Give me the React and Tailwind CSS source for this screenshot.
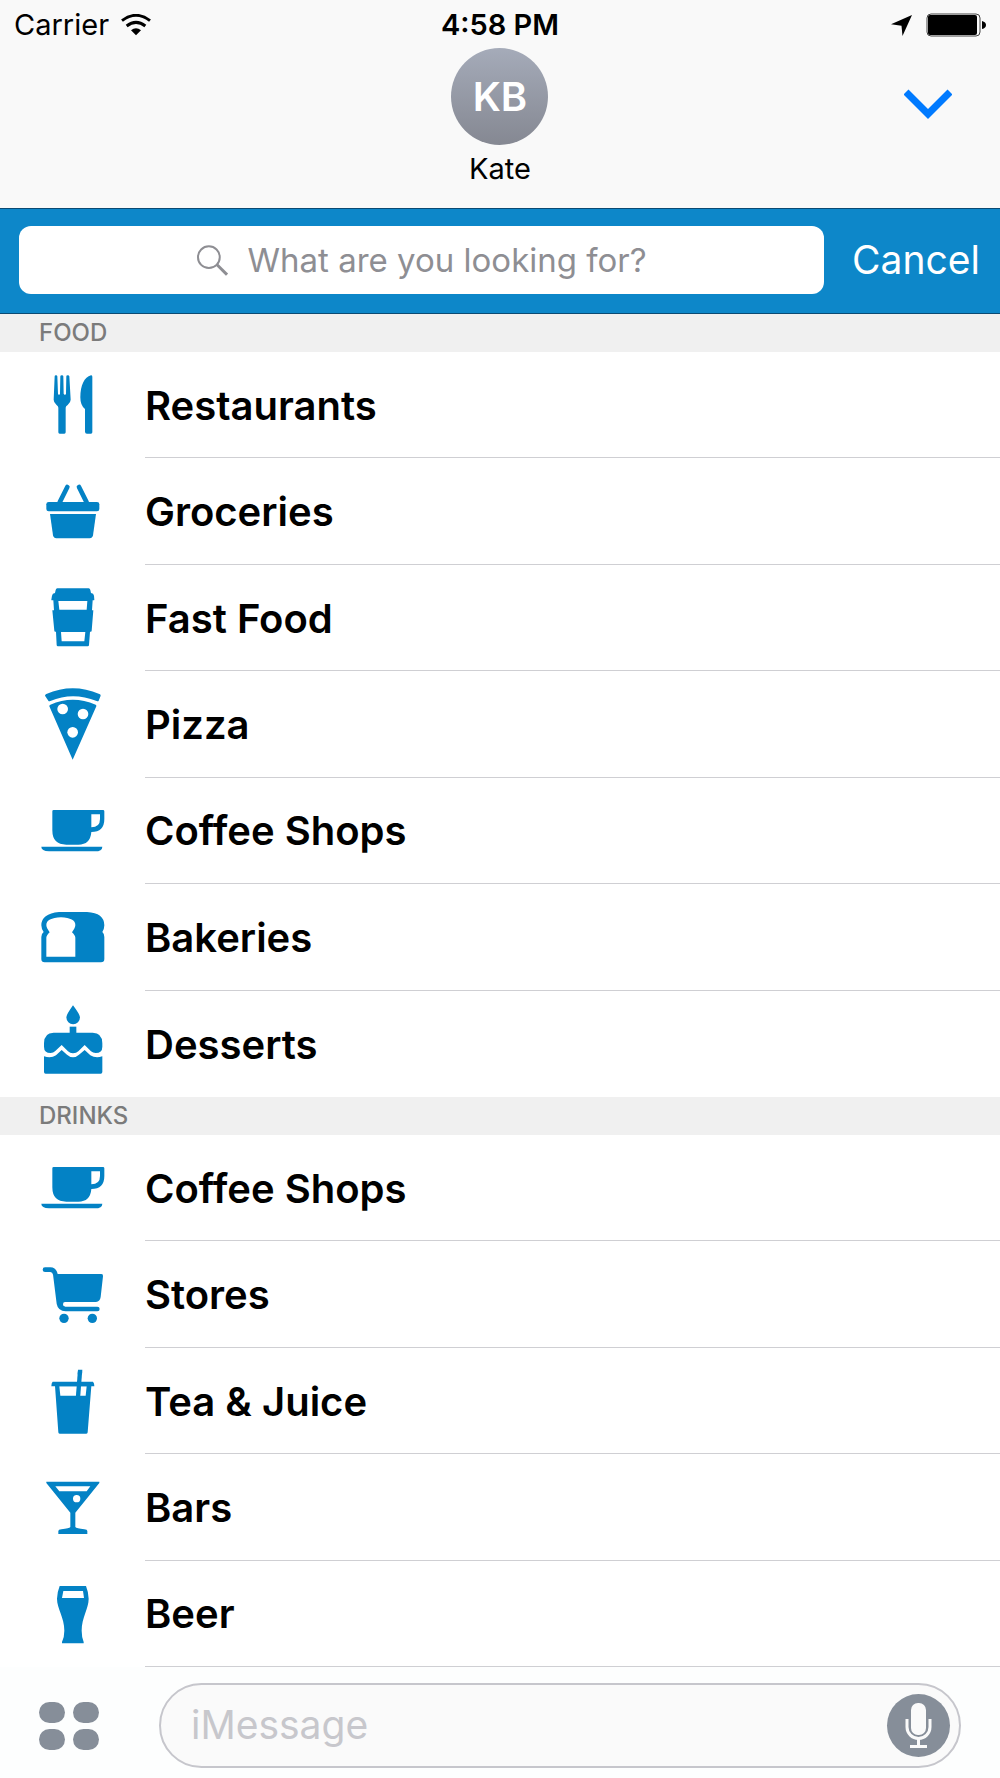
import React from "react";

const icons = {
  restaurant: (
    <>
      <path d="M41 34Q41 31 45 31Q49 31 49 34L51 86Q51 89 54 89Q57 89 57 86L58 34Q58 31 62.5 31Q67 31 67 34L68 86Q69 89 71.5 89Q75 89 75 86L76 34Q76 31 80 31Q85 31 85 34L89 104Q89 112 80 120Q74 124 74 128V202Q74 206 70 206H56Q52 206 52 202V128Q52 124 46 119Q38 112 38 104Z" />
      <path d="M154 35Q154 31 150 31C130 36 118 62 118 97Q118 122 132 132V200Q132 206 138 206H150Q154 206 154 202Z" />
    </>
  ),
  basket: (
    <>
      <path d="M56 91L79 45M137 91L114 45" stroke="currentColor" strokeWidth="14" strokeLinecap="round" />
      <rect x="16" y="90" width="159" height="28" rx="7" />
      <path d="M27 126H165L156 190Q154 199 146 199H46Q38 199 36 190Z" />
    </>
  ),
  takeaway: (
    <path
      fillRule="evenodd"
      d="M44 36Q45 31 49 31H143Q147 31 148 36L150 45Q158 46 159 53L160 65Q160 67 157 67H155L153 97H157L152 158Q152 161 149 161H147L144 201Q144 205 140 205H51Q47 205 47 201L45 161H43Q40 161 40 158L34 97H39L37 67H33Q31 67 31 65L33 53Q34 46 42 45ZM52 69H139L137 95H55ZM60 162H133L130 190H62Z"
    />
  ),
  pizza: (
    <>
      <path d="M12 35Q12 32 16 30Q95 -5 175 30Q179 31 179 35L173 50Q171 53 167 51Q95 23 28 51Q24 53 22 50Z" />
      <path d="M28 62Q95 32 164 62Q167 64 166 67L96 225Q95 228 94 225L25 67Q24 64 28 62Z" />
      <g fill="white">
        <circle cx="65" cy="75" r="16" />
        <circle cx="126" cy="90" r="16" />
        <circle cx="95" cy="145" r="16" />
      </g>
    </>
  ),
  coffee: (
    <>
      <path
        fillRule="evenodd"
        d="M38 57H186Q190 57 190 61V84Q190 123 151 123Q148 161 112 161H76Q34 161 34 118V61Q34 57 38 57ZM151 70V109Q177 109 177 84V70Z"
      />
      <path d="M1 167H184Q184 181 162 181H24Q1 180 1 167Z" />
    </>
  ),
  bread: (
    <path
      fillRule="evenodd"
      d="M54 45H138Q190 48 190 85Q190 95 184 105Q190 110 190 120V186Q190 196 180 196H11Q1 196 1 186V120Q1 110 8 105Q1 95 1 85Q1 50 54 45ZM60 61Q103 63 103 84Q103 92 93 106Q103 116 103 122V179H16V122Q16 116 26 106Q16 92 16 84Q16 63 60 61Z"
    />
  ),
  cake: (
    <>
      <path d="M96 4Q117 32 117 40A20 20 0 0 1 76 40Q76 32 96 4Z" />
      <rect x="86" y="68" width="20" height="22" />
      <path d="M38 86H155Q184 86 184 118V128Q184 147 164 147Q156 147 150 142L131 123L112 142Q106 148 96 148Q87 148 81 142L62 123L42 142Q37 147 29 147Q9 147 9 128V118Q9 86 38 86Z" />
      <path d="M9 157Q30 164 45 154L62 138L78 152Q96 168 114 152L131 138L148 154Q164 164 184 157V204Q184 209 179 209H14Q9 209 9 204Z" />
    </>
  ),
  cart: (
    <>
      <path d="M12 44H28Q40 44 43 58L54 146Q57 162 74 162H169" fill="none" stroke="currentColor" strokeWidth="14" strokeLinecap="round" />
      <path d="M43 57H181Q187 57 186 64L179 126Q177 140 165 141H72Q66 141 66 148Q66 155 72 155V162L54 148Z" />
      <circle cx="69" cy="190" r="14" />
      <circle cx="154" cy="190" r="14" />
    </>
  ),
  juice: (
    <>
      <path d="M117 32L111 108" stroke="currentColor" strokeWidth="13" />
      <path d="M111 26H124L123 40H110Z" />
      <path d="M35 62H156Q160 66 160 76H31Q31 66 35 62Z" />
      <path
        fillRule="evenodd"
        d="M42 75H151L140 214Q140 218 136 218H56Q52 218 52 214ZM55 76L58 104H134L137 76Z"
      />
    </>
  ),
  cocktail: (
    <path
      fillRule="evenodd"
      d="M16 44H175V48L103 137V180Q106 184 130 187Q139 188 139 192V201H52V192Q52 188 61 187Q85 184 88 180V137L16 48ZM43 58L55 73H137L148 58ZM107 84A11 11 0 1 0 107 106A11 11 0 1 0 107 84Z"
    />
  ),
  beer: (
    <path
      fillRule="evenodd"
      d="M56 36H135Q143 56 143 74C143 104 122 130 122 170Q122 190 128 204V208H63V204Q70 190 70 170C70 130 48 104 48 74Q48 56 56 36ZM67 51H126L129 72H63Z"
    />
  ),
};

const sections = [
  {
    title: "FOOD",
    items: [
      { name: "Restaurants", icon: "restaurant" },
      { name: "Groceries", icon: "basket" },
      { name: "Fast Food", icon: "takeaway" },
      { name: "Pizza", icon: "pizza" },
      { name: "Coffee Shops", icon: "coffee" },
      { name: "Bakeries", icon: "bread" },
      { name: "Desserts", icon: "cake" },
    ],
  },
  {
    title: "DRINKS",
    items: [
      { name: "Coffee Shops", icon: "coffee" },
      { name: "Stores", icon: "cart" },
      { name: "Tea & Juice", icon: "juice" },
      { name: "Bars", icon: "cocktail" },
      { name: "Beer", icon: "beer" },
    ],
  },
];

const StatusBar = () => (
  <div className="grid h-12 grid-cols-3 items-center px-[14px] pt-[2px] text-[29px] leading-8">
    <div className="flex items-center gap-3">
      <span>Carrier</span>
      <svg viewBox="0 0 90 66" className="h-[22px] w-[30px]" fill="none" stroke="currentColor" aria-label="Wi-Fi">
        <path d="M3 20Q45 -12 87 20" strokeWidth="9" />
        <path d="M17 36Q45 14 73 36" strokeWidth="9" />
        <path d="M30 49Q45 36 60 49L45 64Z" fill="currentColor" stroke="none" />
      </svg>
    </div>
    <time className="text-center font-semibold">4:58 PM</time>
    <div className="flex items-center justify-end gap-[14px]">
      <svg viewBox="0 0 64 64" className="size-[21px]" fill="currentColor" aria-label="Location">
        <path d="M64 0L35 64L32 33L0 28Z" />
      </svg>
      <svg viewBox="0 0 60 24" className="h-6 w-[60px]" aria-label="Battery">
        <rect x="1" y="1" width="53" height="22" rx="4" fill="none" stroke="#444" />
        <rect x="2" y="2" width="49" height="20" rx="2" />
        <path d="M56 8Q60 9 60 12Q60 15 56 16Z" />
      </svg>
    </div>
  </div>
);

const Contact = () => (
  <div className="grid h-40 grid-cols-3 items-start px-12">
    <div className="col-start-2 flex flex-col items-center">
      <div className="flex size-[97px] items-center justify-center rounded-full bg-linear-to-b from-[#a5abb9] to-[#858892] text-[40px] font-semibold text-white">
        KB
      </div>
      <span className="mt-2 text-[29px] leading-8">Kate</span>
    </div>
    <button type="button" aria-label="Collapse" className="mt-[41px] justify-self-end">
      <svg viewBox="0 0 48 30" className="h-[30px] w-12" fill="none" stroke="#007aff" strokeWidth="7">
        <path d="M2 3L24 25L46 3" />
      </svg>
    </button>
  </div>
);

const SearchBar = () => (
  <div className="flex h-[106px] shrink-0 items-center border-y border-[#0b4a73] bg-[#0d87c9] pr-5 pb-[2px] pl-[19px]">
    <label className="flex h-[68px] flex-1 items-center justify-center gap-5 rounded-xl bg-white text-[#8e8e93]">
      <svg viewBox="0 0 94 94" className="size-[31px]" fill="none" stroke="currentColor" strokeWidth="6">
        <circle cx="36" cy="37" r="33" />
        <path d="M60 59L91 90" strokeWidth="9" />
      </svg>
      <input
        type="text"
        aria-label="Search"
        placeholder="What are you looking for?"
        className="field-sizing-content text-[33px] leading-10 outline-none placeholder:text-[#8e8e93]"
      />
    </label>
    <button type="button" className="ml-7 text-[39px] leading-[48px] text-white">
      Cancel
    </button>
  </div>
);

const Row = ({ name, icon, last }) => (
  <li className="flex min-h-[106px] flex-1">
    <button type="button" className="flex flex-1 items-center text-left">
      <span className="flex w-[145px] justify-center text-[#0382c5]">
        <svg viewBox="0 0 192 240" className="h-20 w-16" fill="currentColor" aria-hidden="true">
          {icons[icon]}
        </svg>
      </span>
      <span className={`flex flex-1 items-center self-stretch pt-[2px] text-[40px] font-semibold ${last ? "" : "border-b border-[#cfcfd3]"}`}>
        {name}
      </span>
    </button>
  </li>
);

const MessageBar = () => (
  <footer className="flex h-[111px] shrink-0 items-center bg-[#fdfefe] pt-[6px] pr-[39px] pl-[39px]">
    <button type="button" aria-label="Apps" className="grid grid-cols-2 gap-x-2 gap-y-[6px]">
      {[0, 1, 2, 3].map((dot) => (
        <span key={dot} className="h-[21px] w-[26px] rounded-[11px] bg-[#868e99]" />
      ))}
    </button>
    <div className="ml-[60px] flex h-[85px] flex-1 items-center rounded-full border-2 border-[#c6c6cc] bg-[#fafafa] pr-[9px] pl-[30px]">
      <input
        type="text"
        aria-label="iMessage"
        placeholder="iMessage"
        className="min-w-0 flex-1 text-[39px] outline-none placeholder:text-[#c7c7cc]"
      />
      <button type="button" aria-label="Dictate" className="size-[63px] rounded-full bg-[#868e99]">
        <svg viewBox="0 0 63 63" fill="none" stroke="#fafafa" strokeWidth="2">
          <rect x="25" y="10" width="13" height="30" rx="6" fill="#fafafa" />
          <path d="M20 25V33A11.5 11.5 0 0 0 43 33V25" strokeWidth="3" />
          <path d="M31.5 44V53M23 52.5H40" strokeWidth="3" />
        </svg>
      </button>
    </div>
  </footer>
);

const App = () => {
  return (
    <div className="flex min-h-screen flex-col bg-white font-['Inter',sans-serif] text-black">
      <header className="bg-[#f9f9f9]">
        <StatusBar />
        <Contact />
      </header>
      <SearchBar />

      {/* Rows share the height left between the two bars */}
      <main className="flex flex-1 flex-col">
        {sections.map((section, index) => (
          <section key={section.title} className="contents">
            <h2 className="flex h-[38px] shrink-0 items-center bg-[#f0f0f0] pl-[39px] text-2xl font-medium text-[#7b7b7b]">
              {section.title}
            </h2>
            <ul className="contents">
              {section.items.map((item, i) => (
                <Row
                  key={item.name}
                  {...item}
                  last={index < sections.length - 1 && i === section.items.length - 1}
                />
              ))}
            </ul>
          </section>
        ))}
      </main>

      <MessageBar />
    </div>
  );
};

export default App;
